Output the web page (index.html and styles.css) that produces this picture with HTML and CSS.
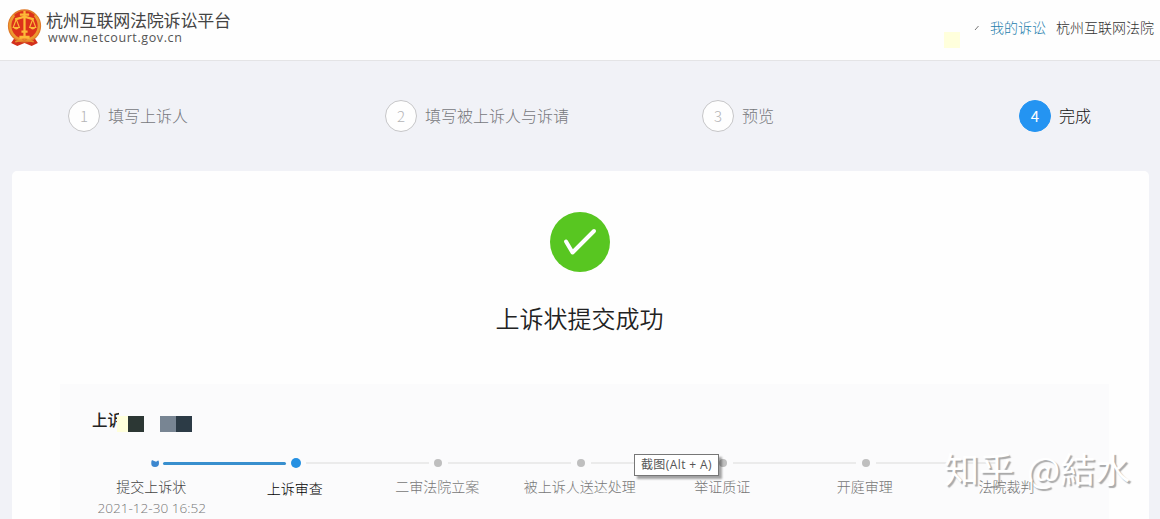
FILE: index.html
```html
<!DOCTYPE html>
<html lang="zh-CN">
<head>
  <meta charset="UTF-8">
  <meta name="viewport" content="width=device-width, initial-scale=1.0">
  <title>杭州互联网法院诉讼平台</title>
  <link rel="stylesheet" href="styles.css">
</head>
<body>
  <header class="header">
    <div class="brand">
      <svg class="emblem" viewBox="0 0 34 38">
        <path d="M8 28 L26 28 L30 34 L24 37 L17 34 L10 37 L4 34 Z" fill="#d3301c"/>
        <circle cx="17" cy="17.5" r="15.4" fill="#dc321b" stroke="#e07a2a" stroke-width="1.6"/>
        <path d="M7 7 C-1 17 4 29 15 31 M27 7 C35 17 30 29 19 31" fill="none" stroke="#ec9a30" stroke-width="2.4"/>
        <path d="M17 3 V29 M12.5 6.5 H21.5 M8 11 L17 8.5 L26 11" fill="none" stroke="#fdb938" stroke-width="2.2"/>
        <path d="M9 11 L6 19 H12 Z M25 11 L22 19 H28 Z" fill="none" stroke="#fdb938" stroke-width="1.1"/>
        <path d="M6 19 H12 Q9 23 6 19 M22 19 H28 Q25 23 22 19 M12 27 H22 V30 H12 Z M14 22 H20 V24 H14 Z" fill="#fdb938"/>
        <path d="M8 33 L17 31 L26 33" fill="none" stroke="#e88f30" stroke-width="1.5"/>
      </svg>
      <div class="brand-text">
        <h1>杭州互联网法院诉讼平台</h1>
        <p>www.netcourt.gov.cn</p>
      </div>
    </div>
    <nav class="user-nav">
      <span class="mask pale"></span>
      <svg class="tick" viewBox="0 0 6 6"><path d="M1 5 L4.5 1" stroke="#777" fill="none"/></svg>
      <a href="#" class="mine">我的诉讼</a>
      <a href="#">杭州互联网法院</a>
    </nav>
  </header>

  <ol class="steps">
    <li><span class="num">1</span><span>填写上诉人</span></li>
    <li><span class="num">2</span><span>填写被上诉人与诉请</span></li>
    <li><span class="num">3</span><span>预览</span></li>
    <li class="active"><span class="num">4</span><span>完成</span></li>
  </ol>

  <main class="card">
    <svg class="success" viewBox="0 0 60 60">
      <circle cx="30" cy="30" r="30" fill="#58c621"/>
      <path d="M16 29.5 L22.5 40.5 L44 19" fill="none" stroke="#fff" stroke-width="4" stroke-linecap="round" stroke-linejoin="round"/>
    </svg>
    <h2>上诉状提交成功</h2>

    <section class="panel">
      <div class="case">
        <span class="case-name">上诉</span>
        <span class="mask pale"></span>
        <span class="mask dark"></span>
        <span class="mask slate"></span>
        <span class="mask navy"></span>
      </div>
      <ul class="timeline">
        <li class="done"><i></i><span>提交上诉状</span><time>2021-12-30 16:52</time></li>
        <li class="current"><i></i><span>上诉审查</span></li>
        <li><i></i><span>二审法院立案</span></li>
        <li><i></i><span>被上诉人送达处理</span></li>
        <li><i></i><span>举证质证</span></li>
        <li><i></i><span>开庭审理</span></li>
        <li class="last"><i></i><span>法院裁判</span></li>
      </ul>
    </section>
  </main>

  <div class="tooltip">截图(Alt + A)</div>
  <div class="watermark"><span>知乎</span><span>@結水</span></div>
</body>
</html>
```
FILE: styles.css
```css
* { margin: 0; padding: 0; box-sizing: border-box; }
body {
  width: 1160px;
  height: 519px;
  overflow: hidden;
  position: relative;
  background: #f1f2f7;
  color: #333;
  font-family: "Noto Sans CJK SC", "Open Sans", sans-serif;
  font-weight: 300;
}
ul, ol { list-style: none; }
a { color: inherit; text-decoration: none; }

/* Header */
.header {
  height: 61px;
  padding: 0 6px 5px 7px;
  display: flex;
  justify-content: space-between;
  align-items: center;
  background: #fefefe;
  border-bottom: 1px solid #e4e4e6;
}
.brand { display: flex; align-items: center; gap: 4px; }
.emblem { width: 35px; height: 39px; }
.brand-text h1 { font-size: 17px; line-height: 20px; font-weight: 400; letter-spacing: -0.2px; color: #444; }
.brand-text p { font: 12.5px/16px "Open Sans", sans-serif; letter-spacing: 0.6px; padding-left: 2px; color: #555; }
.user-nav { display: flex; align-items: center; font-size: 14px; line-height: 20px; font-weight: 300; color: #333; }
.user-nav a { margin-top: -2px; }
.user-nav .mask { margin: 24px 14px 0 0; }
.user-nav .tick { width: 6px; height: 6px; margin-right: 10px; }
.user-nav .mine { color: #1f80ad; margin-right: 10px; }

/* Redacted blocks */
.mask { width: 16px; height: 16px; }
.mask.pale { background: #ffffdc; }
.mask.dark { background: #2c3734; }
.mask.slate { background: #788593; margin-left: 16px; }
.mask.navy { background: #2c3b46; }

/* Steps */
.steps { height: 110px; padding-left: 68px; display: flex; }
.steps li {
  width: 317px;
  flex: none;
  height: 110px;
  display: flex;
  align-items: center;
  font-size: 16px;
  line-height: 24px;
  color: #77787c;
}
.steps li span:last-child { margin-top: -2px; }
.steps .num {
  width: 32px;
  height: 32px;
  margin-right: 8px;
  border: 1px solid #c6c6c8;
  border-radius: 50%;
  background: #fefefe;
  color: #b4b4b6;
  font-size: 15px;
  text-align: center;
  line-height: 30px;
}
.steps .active { width: 140px; color: #111; }
.steps .active .num { background: #2494f2; border-color: #2494f2; color: #fff; font-weight: 400; }

/* Result card */
.card {
  width: 1137px;
  height: 348px;
  margin-left: 12px;
  padding: 41px 40px 0 48px;
  background: #fefefe;
  border-radius: 5px 5px 0 0;
  display: flex;
  flex-direction: column;
  align-items: center;
}
.success { width: 60px; height: 60px; margin-right: 9px; flex: none; }
.card h2 { margin: 28px 10px 0 0; font-size: 24px; line-height: 36px; font-weight: 350; color: #222; }
.panel { width: 1049px; height: 135px; margin-top: 48px; padding: 24px 0 0 21px; background: #fbfbfc; flex: none; }
.case { height: 32px; padding-left: 11px; display: flex; align-items: center; }
.case .case-name { width: 27px; margin-right: -2px; overflow: hidden; white-space: nowrap; font-size: 15.5px; line-height: 24px; font-weight: 500; margin-top: -11px; color: #222; }
.case .mask { flex: none; }
.case .pale { width: 11px; }

/* Timeline */
.timeline { display: flex; margin-top: 17px; }
.timeline li {
  width: 142.5px;
  flex: none;
  position: relative;
  display: flex;
  flex-direction: column;
  align-items: center;
  font-size: 14px;
  line-height: 20px;
  color: #777;
}
.timeline .last { width: 141px; }
.timeline i { width: 8px; height: 8px; margin: 2px 0 9px 2px; border-radius: 50%; background: #bfbfbf; }
.timeline .last i { visibility: hidden; }
.timeline .last span { position: relative; z-index: 2; }
.timeline li:not(:last-child)::after {
  content: "";
  position: absolute;
  top: 5px;
  left: 82px;
  width: 123px;
  height: 2px;
  background: #ebebeb;
}
.timeline li.done::after { top: 5px; height: 3px; background: #388fce; border-radius: 2px; }
.timeline .done i { margin-left: 6px; background: #3c87cf; clip-path: polygon(0 10%, 60% 35%, 100% 10%, 100% 100%, 0 100%); }
.timeline .done span { color: #444; margin-right: 2px; }
.timeline .current i { width: 10px; height: 10px; margin: 1px 0 10px 2px; background: #2590e2; }
.timeline .current span { color: #000; }
.timeline time { margin-right: 1px; font-family: "Open Sans", sans-serif; font-size: 13.6px; line-height: 23px; white-space: nowrap; }

/* Overlays */
.tooltip {
  position: absolute;
  left: 634px;
  top: 454px;
  width: 85px;
  height: 22px;
  border: 1px solid #777;
  background: #fff;
  box-shadow: 3px 3px 2px rgba(0, 0, 0, 0.35);
  color: #555;
  font-family: "Open Sans", "Noto Sans CJK SC", sans-serif;
  font-size: 12px;
  letter-spacing: 0.4px;
  font-weight: 400;
  line-height: 20px;
  text-align: center;
  white-space: nowrap;
}
.watermark {
  position: absolute;
  z-index: 1;
  left: 944px;
  top: 447px;
  display: flex;
  gap: 13px;
  color: #fff;
  font-size: 35px;
  line-height: 42px;
  font-weight: 400;
  text-shadow: 2px 2px 1px #aaa;
}
```
